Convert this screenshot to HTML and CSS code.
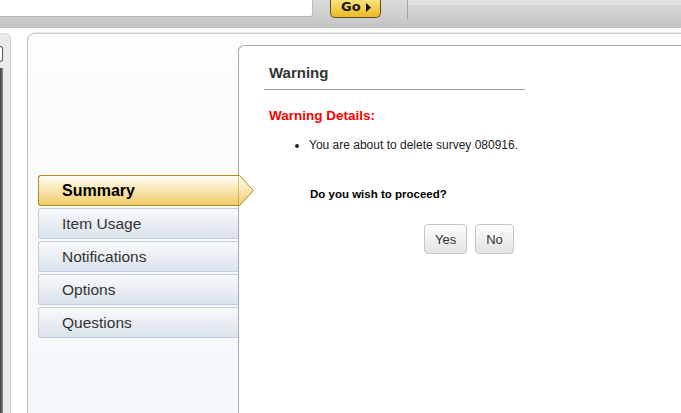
FILE: index.html
```html
<!DOCTYPE html>
<html>
<head>
<meta charset="utf-8">
<link rel="stylesheet" href="styles.css">
</head>
<body>
<div class="topbar">
  <div class="search"></div>
  <div class="go">Go<svg class="go-arrow" width="5" height="9" viewBox="0 0 5 9"><polygon points="0,0 5,4.5 0,9" fill="#111"/></svg></div>
  <div class="sep"></div>
  <div class="topright"></div>
</div>
<div class="workspace">
  <div class="leftpane">
    <div class="lp-input"></div>
    <div class="lp-list"></div>
  </div>
  <div class="main">
    <div class="nav">
      <div class="tab active">Summary<svg class="tab-arrow" width="17" height="31" viewBox="0 0 17 31"><defs><linearGradient id="ga" x1="0" y1="0" x2="0" y2="1"><stop offset="0" stop-color="#fffdf6"/><stop offset="1" stop-color="#f0cc68"/></linearGradient></defs><polygon points="0,0.5 1.5,0.5 15.5,15.5 1.5,30.5 0,30.5" fill="url(#ga)" stroke="#a88c1e" stroke-width="1"/></svg></div>
      <div class="tab">Item Usage</div>
      <div class="tab">Notifications</div>
      <div class="tab">Options</div>
      <div class="tab">Questions</div>
    </div>
    <div class="content">
      <h2 class="heading">Warning</h2>
      <div class="details">Warning Details:</div>
      <ul class="msgs">
        <li>You are about to delete survey 080916.</li>
      </ul>
      <div class="question">Do you wish to proceed?</div>
      <div class="buttons">
        <button class="btn">Yes</button>
        <button class="btn">No</button>
      </div>
    </div>
  </div>
</div>
</body>
</html>
```
FILE: styles.css
```css
html, body {
  margin: 0;
  padding: 0;
  background: #fff;
  overflow: hidden;
  height: 413px;
}
body {
  font-family: "Liberation Sans", Arial, sans-serif;
  color: #222;
}
.topbar {
  display: flex;
  height: 28px;
  background: linear-gradient(#dadada, #c4c4c4);
}
.search {
  width: 313px;
  height: 17px;
  box-sizing: border-box;
  background: #fff;
  border-right: 1px solid #bdbdbd;
  border-bottom: 1px solid #b4b4b4;
  border-bottom-right-radius: 3px;
}
.go {
  margin-left: 17px;
  width: 51px;
  height: 18px;
  box-sizing: border-box;
  border: 1px solid #5e5020;
  border-top: none;
  border-radius: 0 0 5px 5px;
  background: linear-gradient(#fbe27c, #eab924);
  font-family: "DejaVu Sans", Verdana, sans-serif;
  font-weight: bold;
  font-size: 13px;
  line-height: 14px;
  color: #1a1a1a;
  padding-left: 10px;
  display: flex;
  align-items: center;
  padding-bottom: 3px;
}
.go-arrow {
  margin-left: 5px;
}
.sep {
  margin-left: 26px;
  width: 1px;
  height: 19px;
  background: #a4a4a4;
}
.topright {
  flex: 1;
  border-top: 5px solid #e2e2e2;
}
.workspace {
  display: flex;
  margin-top: 5px;
  height: 390px;
}
.leftpane {
  width: 11px;
  box-sizing: border-box;
  background: #e9e9e9;
  border-right: 1px solid #d2d2d2;
  border-top: 1px solid #d8d8d8;
  border-top-right-radius: 6px;
  display: flex;
  flex-direction: column;
}
.lp-input {
  margin-top: 12px;
  width: 2px;
  height: 14px;
  border: 1px solid #555;
  border-left: none;
  border-radius: 0 3px 3px 0;
  background: #fff;
}
.lp-list {
  margin-top: 6px;
  width: 3px;
  flex: 1;
  background: linear-gradient(to right, #3a3a3a, #8a8a8a);
}
.main {
  flex: 1;
  margin-left: 16px;
  display: flex;
  border: 1px solid #bcbcbc;
  border-top-color: #cfcfcf;
  border-right: none;
  border-bottom: none;
  border-top-left-radius: 8px;
  box-shadow: 0 -1px 0 #e8e8e8;
  background: linear-gradient(#fdfdfd, #f4f7fb);
}
.nav {
  width: 210px;
  padding-top: 141px;
  padding-left: 10px;
  box-sizing: border-box;
}
.tab {
  position: relative;
  height: 31px;
  box-sizing: border-box;
  margin-bottom: 2px;
  border: 1px solid #c3cddd;
  border-right: none;
  border-radius: 3px 0 0 3px;
  background: linear-gradient(#f9fafc, #dae2ec);
  font-size: 15.5px;
  line-height: 29px;
  color: #333;
  padding-left: 23px;
}
.tab.active {
  z-index: 2;
  border-color: #a88c1e;
  background: linear-gradient(#fffdf6, #f0cc68);
  font-weight: bold;
  font-size: 16px;
  color: #000;
}
.tab-arrow {
  position: absolute;
  left: 199px;
  top: -1px;
}
.content {
  flex: 1;
  margin-top: 11px;
  background: #fff;
  border: 1px solid #a9a9a9;
  border-right: none;
  border-bottom: none;
  border-top-left-radius: 6px;
  padding-top: 18px;
}
.heading {
  margin: 0 0 0 25px;
  width: 261px;
  box-sizing: border-box;
  padding: 0 0 8px 5px;
  border-bottom: 1px solid #9a9a9a;
  font-size: 15px;
  line-height: 17px;
  font-weight: bold;
  color: #333;
}
.details {
  margin: 18px 0 0 30px;
  font-size: 13.5px;
  line-height: 16px;
  font-weight: bold;
  color: #ff0000;
}
.msgs {
  margin: 14px 0 0 0;
  padding-left: 70px;
  font-size: 12px;
  line-height: 14px;
  color: #222;
}
.question {
  margin: 35px 0 0 71px;
  font-size: 11.5px;
  line-height: 14px;
  font-weight: bold;
  color: #000;
}
.buttons {
  display: flex;
  gap: 8px;
  margin: 23px 0 0 185px;
}
.btn {
  height: 30px;
  padding: 0 10px;
  box-sizing: border-box;
  border: 1px solid #c6c6c6;
  border-radius: 4px;
  background: linear-gradient(#fdfdfd, #e3e3e3);
  font-family: "Liberation Sans", Arial, sans-serif;
  font-size: 13px;
  color: #333;
}
```
